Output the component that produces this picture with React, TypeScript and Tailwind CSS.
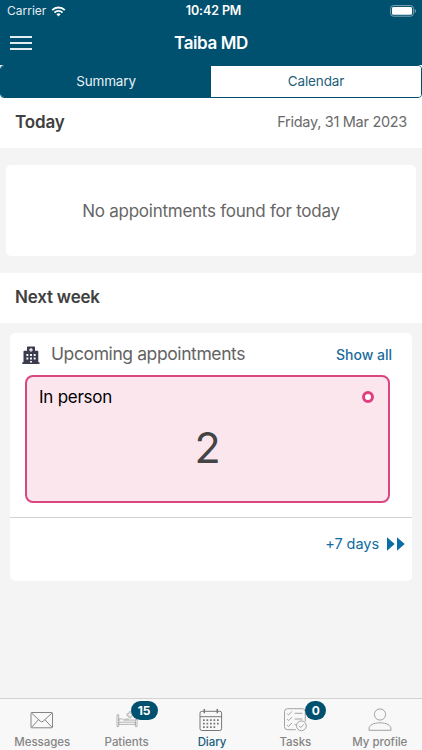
import React from 'react';
import clsx from 'clsx';

interface NavItem {
  label: string;
  icon: React.ReactNode;
  badge?: number;
  active?: boolean;
}

function WifiIcon() {
  return (
    <svg width="15" height="11" viewBox="0 0 14 11" fill="none" stroke="white" strokeWidth="1.9">
      <path d="M0.7 4.1a9 9 0 0 1 12.6 0" />
      <path d="M3 6.6a5.6 5.6 0 0 1 8 0" />
      <path d="M7 10.4 4.9 8.3a3 3 0 0 1 4.2 0z" fill="white" stroke="none" />
    </svg>
  );
}

function BatteryIcon() {
  return (
    <svg width="27" height="12" viewBox="0 0 27 12" fill="none">
      <rect x="0.6" y="0.6" width="22.8" height="10.6" rx="2.8" stroke="#7fa5b5" />
      <rect x="2" y="2" width="20" height="7.8" rx="1.4" fill="white" />
      <path d="M24.6 4v4c.8-.3 1.3-1.1 1.3-2s-.5-1.7-1.3-2z" fill="#7fa5b5" />
    </svg>
  );
}

function HospitalIcon() {
  return (
    <svg width="18" height="18" viewBox="0 0 18 18">
      <path
        d="M5 1.2Q5 .5 5.7.5h6.6q.7 0 .7.7v3.6h2.6q.7 0 .7.7v10.7h1.2V18H.3v-1.8h1.2V5.5q0-.7.7-.7H5z"
        fill="#3a3b4f"
      />
      <path d="M8.4 2.1h1.2v1.2h1.2v1.2H9.6v1.2H8.4V4.5H7.2V3.3h1.2z" fill="white" />
      <path
        d="M4.4 8h1.9v1.9H4.4zM8.05 8h1.9v1.9h-1.9zM11.7 8h1.9v1.9h-1.9zM4.4 11.5h1.9v1.9H4.4zM8.05 11.5h1.9v1.9h-1.9zM11.7 11.5h1.9v1.9h-1.9zM8.05 15h1.9v1.5h-1.9z"
        fill="white"
      />
    </svg>
  );
}

function MailIcon() {
  return (
    <svg width="24" height="24" viewBox="0 0 24 24" fill="none" stroke="#858585" strokeWidth="1">
      <rect x="1" y="4.5" width="21.5" height="15.3" rx="0.8" />
      <path d="M1.5 5l8.8 8.2q1.45 1.2 2.9 0L22 5M1.5 19.3l7-7.5M22 19.3l-7-7.5" />
    </svg>
  );
}

function BedIcon() {
  return (
    <svg width="24" height="24" viewBox="0 0 24 24" fill="none" stroke="#a3a3a3" strokeWidth="0.8">
      <path d="M2 6.8h1.7v11.8H2zM20.4 11.5h1.7v7.1h-1.7zM3.7 14.2h16.7v2.2H3.7z" />
      <path d="M4 13v-2.1h3.3l1.5 1.2h11.4M9 12.2l1.3-1.1h3.5" />
      <path d="M14 3.8h2v2h2v2h-2v2h-2v-2h-2v-2h2z" />
    </svg>
  );
}

function CalendarIcon() {
  return (
    <svg width="24" height="24" viewBox="0 0 24 24" fill="none" stroke="#777777" strokeWidth="1">
      <rect x="1" y="3.3" width="21.6" height="19.2" rx="1.8" />
      <path d="M1 8.7h21.6" />
      <path d="M5.3 1v4.3M18.3 1v4.3" strokeWidth="1.5" />
      <path d="M4 12.2h16M4 15.7h16M4 19.1h13" strokeWidth="1.7" strokeDasharray="1.7 1.8" />
    </svg>
  );
}

function TasksIcon() {
  return (
    <svg width="24" height="24" viewBox="0 0 24 24" fill="none" stroke="#999999" strokeWidth="0.9">
      <path d="M12.8 21.7H4.5a3 3 0 0 1-3-3v-15a3 3 0 0 1 3-3h14.8a3 3 0 0 1 3 3v9.6" />
      <path d="M4 5.4l1.5 1.5 3.6-3.5M4 11.1l1.5 1.5 3.6-3.5M4 16.9l1.5 1.5 3.6-3.5" />
      <path d="M11.6 5.3h7.8M11.6 11h7.8M11.6 16.7h1.8" />
      <circle cx="18.4" cy="17.8" r="4.9" />
      <path d="M16 17.9l1.7 1.7 3.1-3.2" />
    </svg>
  );
}

function ProfileIcon() {
  return (
    <svg width="24" height="24" viewBox="0 0 24 24" fill="none" stroke="#999999" strokeWidth="0.9">
      <circle cx="12" cy="6.5" r="5.6" />
      <path d="M1 22.3v-1.5c0-3.6 4.5-6 11-6s11 2.4 11 6v1.5z" />
    </svg>
  );
}

const navItems: NavItem[] = [
  { label: 'Messages', icon: <MailIcon /> },
  { label: 'Patients', icon: <BedIcon />, badge: 15 },
  { label: 'Diary', icon: <CalendarIcon />, active: true },
  { label: 'Tasks', icon: <TasksIcon />, badge: 0 },
  { label: 'My profile', icon: <ProfileIcon /> },
];

function Header() {
  return (
    <header className="h-[65px] bg-[#00506f] text-white">
      <div className="grid h-[22px] grid-cols-3 items-center pl-[7px] pr-[5px]">
        <div className="flex items-center gap-[5px]">
          <span className="text-[12px] leading-[22px] text-[#e3edf1]">Carrier</span>
          <WifiIcon />
        </div>
        <span className="pl-[3px] text-center text-[12.5px] font-semibold leading-[22px] tracking-[-0.1px]">10:42 PM</span>
        <div className="flex justify-end">
          <BatteryIcon />
        </div>
      </div>
      <div className="grid h-[43px] grid-cols-3 items-center px-[10px]">
        <button aria-label="Menu" className="flex w-[22px] flex-col gap-[4px] pb-px">
          <span className="h-[2px] bg-[#e3edf1]" />
          <span className="h-[2px] bg-[#e3edf1]" />
          <span className="h-[2px] bg-[#e3edf1]" />
        </button>
        <h1 className="text-center text-[17px] font-semibold tracking-[-0.4px]">Taiba MD</h1>
      </div>
    </header>
  );
}

function Tabs() {
  return (
    <div className="bg-white">
      <div className="grid h-[33px] grid-cols-2 overflow-hidden rounded-[4px] border border-[#00506f] text-[13.5px] tracking-[-0.15px]">
        <button className="bg-[#00506f] text-[#e9f1f4]">Summary</button>
        <button className="bg-white text-[#1f5f7c]">Calendar</button>
      </div>
    </div>
  );
}

function UpcomingCard() {
  return (
    <section className="mx-[10px] mt-[10px] h-[248px] rounded-[5px] bg-white">
      <div className="flex h-[42px] items-center pl-[12px] pr-[20px]">
        <span className="pt-[2px]">
          <HospitalIcon />
        </span>
        <h3 className="ml-[11px] text-[17.5px] tracking-[-0.4px] text-[#636363]">Upcoming appointments</h3>
        <button className="ml-auto text-[14px] font-medium text-[#1a6d9c]">Show all</button>
      </div>
      <div className="ml-[15px] mr-[22px] h-[128px] rounded-[8px] border-2 border-[#d94680] bg-[#fce6ee] px-[12px]">
        <div className="flex h-[40px] items-center justify-between">
          <span className="pt-[2px] text-[17px] tracking-[-0.25px] text-black">In person</span>
          <span className="mr-[2px] size-[12px] rounded-full border-[3px] border-[#e0407f] bg-white" />
        </div>
        <div className="pt-px text-center text-[43px] leading-[58px] text-[#444444]">2</div>
      </div>
      <div className="mt-[14px] flex h-[53px] items-center justify-end gap-[8px] border-t border-[#d3d3d3] pr-[7px] text-[#0e6da0]">
        <span className="text-[14.5px] tracking-[-0.05px]">+7 days</span>
        <svg width="18" height="14" viewBox="0 0 18 14" fill="#0a6da4">
          <path d="M0 0.3v13.4L7.7 7zM10 0.3v13.4L17.7 7z" />
        </svg>
      </div>
    </section>
  );
}

function BottomNav() {
  return (
    <nav className="mt-auto grid h-[52px] grid-cols-5 border-t border-[#d2d2d2] bg-[#f8f8f8]">
      {navItems.map(item => (
        <button key={item.label} className="flex flex-col items-center pt-[9px]">
          <span className="relative">
            {item.icon}
            {item.badge !== undefined && (
              <span
                className={clsx(
                  'absolute -top-[7px] flex h-[19px] items-center justify-center rounded-full bg-[#00506f] text-[12px] font-bold text-white',
                  item.badge > 9 ? 'left-[16px] w-[27px]' : 'left-[22px] w-[21px]'
                )}
              >
                {item.badge}
              </span>
            )}
          </span>
          <span
            className={clsx(
              'whitespace-nowrap text-[11.5px] font-medium leading-[20px] tracking-[-0.05px]',
              item.active ? 'pl-[2px] text-[#1a607f]' : 'text-[#858585]'
            )}
          >
            {item.label}
          </span>
        </button>
      ))}
    </nav>
  );
}

export default function App() {
  return (
    <div className="flex h-screen flex-col overflow-hidden bg-[#f4f4f4] font-['Inter',sans-serif]">
      <Header />
      <Tabs />
      <div className="flex h-[50px] items-center justify-between bg-white px-[15px]">
        <h2 className="text-[17px] font-semibold tracking-[-0.15px] text-[#404040]">Today</h2>
        <span className="pb-[3px] text-[14.5px] tracking-[-0.3px] text-[#6a6a6a]">Friday, 31 Mar 2023</span>
      </div>
      <div className="mx-[6px] my-[17px] flex h-[91px] items-center justify-center rounded-[5px] bg-white">
        <p className="pt-[2px] text-[17px] tracking-[-0.25px] text-[#666666]">No appointments found for today</p>
      </div>
      <div className="flex h-[50px] items-center bg-white px-[15px]">
        <h2 className="text-[17px] font-semibold tracking-[-0.2px] text-[#404040]">Next week</h2>
      </div>
      <UpcomingCard />
      <BottomNav />
    </div>
  );
}
